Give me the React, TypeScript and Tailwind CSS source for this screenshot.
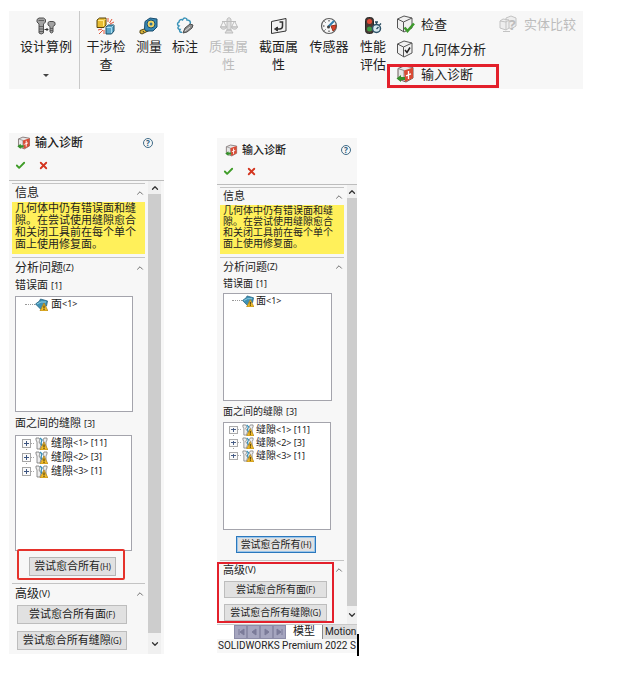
import type { ReactNode } from "react";
import clsx from "clsx";
import { Check, ChevronDown, ChevronUp, X } from "lucide-react";

function StudyIcon() {
  return (
    <svg width="20" height="18" viewBox="0 0 20 18" fill="#a3a3a3" stroke="#505050" strokeLinejoin="round">
      <path d="M1 2.500 3 1h4.500l2 1.500v2.500L7.500 7v9L5.200 17 3 16V7L1 5z" />
      <path d="M12 5.500 13.500 4.500H17l2 1v2.500L17 9.500v5.500L15.500 16 14 15V9.500l-2-1.500z" />
      <path d="M3 9.500h4M3 12h4M3 14.500h4M14 11.500h3M14 13.500h3M2.500 3.500h5.500" fill="none" strokeWidth="0.800" />
      <path d="M8.500 12.500H12M10.500 11l1.500 1.500-1.500 1.500" fill="none" stroke="#2f2f2f" />
    </svg>
  );
}

function InterferenceIcon() {
  return (
    <svg width="20" height="18" viewBox="0 0 20 18" strokeLinejoin="round">
      <path d="M1 3 3.500 1H10v7l-2 2.500H1z" fill="#e8bd32" stroke="#54430c" />
      <path d="M2 3.500h5.500V9M8 3.500 9.500 2" fill="none" stroke="#ffe98b" />
      <path d="M10 10l2.500-2H18v6l-2.500 3H10z" fill="#5ba6c8" stroke="#1b4c66" />
      <path d="M10.500 10.500h5V16M15.500 10.500 17.500 8.500" fill="none" stroke="#a9ddf0" />
      <path d="M12 5V1M13.500 6 16 2M14 7l4-2M6 12l-4 1M7 13l-4 4M8 13v4" fill="none" stroke="#e0563a" />
    </svg>
  );
}

function MeasureIcon() {
  return (
    <svg width="20" height="18" viewBox="0 0 20 18">
      <path d="M1 13.500 8 11l3 2L3 17l-2-1z" fill="#d9b53a" stroke="#57481a" />
      <path d="m4 14 1 1.500M7 13l1 1.500" stroke="#3e3720" />
      <path d="M6 4.500 11 1l7 1v8l-4 4H7L5.500 12z" fill="#3988b4" stroke="#194c6d" />
      <circle cx="12" cy="7" r="4" fill="#f0d463" stroke="#165077" />
      <circle cx="12" cy="7" r="1.500" fill="#2e7096" />
    </svg>
  );
}

function MarkupIcon() {
  return (
    <svg width="20" height="18" viewBox="0 0 20 18" fill="none">
      <path d="M7 15c-2 1-3-1-2-2.500-2 0-3-2-1-3.500-2-1-2-3 0-4C4 3 6 2 7.500 3 9 0 12 1 12 3c3 0 4 2 3 4" stroke="#3a93b8" strokeWidth="1.500" />
      <path d="m8 16 2-5 5-4 3 1-1 3-5 4z" fill="#8e8e8e" stroke="#4c4c4c" />
      <path d="m10 14 5-4" stroke="#ddd" />
    </svg>
  );
}

function MassIcon() {
  return (
    <svg width="20" height="18" viewBox="0 0 20 18" fill="none" stroke="#bdbdbd">
      <path d="M8 3c0-3 4-3 4 0v10h-4zM6 16l2-3h4l2 3zM3 4.500h14" fill="#dedede" />
      <path d="M4 5 1.500 10h6L5 5M15 5l-2.500 5h6L16 5" />
      <path d="M1.500 10c1 3 5 3 6 0zM12.500 10c1 3 5 3 6 0z" fill="#dcdcdc" />
    </svg>
  );
}

function SectionIcon() {
  return (
    <svg width="18" height="18" viewBox="0 0 18 18" fill="none" stroke="#333">
      <path d="M1.500 4.500 16 1.500V14L1.500 16.500z" fill="#f1f1f1" />
      <path d="M9.500 5h3v4c0 2-1 3-3 3H7" strokeWidth="1.500" />
      <path d="m7.500 10-3 2 3 2z" fill="#333" />
    </svg>
  );
}

function SensorIcon() {
  return (
    <svg width="18" height="18" viewBox="0 0 18 18" fill="none">
      <circle cx="9" cy="9" r="7.500" fill="#f7f7f7" stroke="#5d5d5d" strokeWidth="1.200" />
      <path d="M9 3v1.500M4.500 4.500l1 1M3 9h1.500M4.500 13.500l1-1M9 15v-1.500" stroke="#333" />
      <path d="m8 10 6-6" stroke="#2f7fae" strokeWidth="2" />
      <path d="m11 9 5-1c0 3-1 5-3 6z" fill="#d8432c" stroke="#983019" />
      <circle cx="8.500" cy="10" r="1.500" fill="#444" />
    </svg>
  );
}

function PerformanceIcon() {
  return (
    <svg width="18" height="18" viewBox="0 0 18 18">
      <rect x="1.500" y="0.500" width="8" height="16" rx="3" fill="#4b3934" stroke="#272727" />
      <circle cx="5.500" cy="4.500" r="2.500" fill="#e24a36" />
      <circle cx="5.500" cy="12" r="2.500" fill="#3f9b45" />
      <circle cx="12.500" cy="11.500" r="4" fill="#d9e9f1" stroke="#2c5268" strokeWidth="1.500" />
      <path d="M12.500 7V5M11 5h3M15.500 8 17 6.500M12.500 12l2-2" fill="none" stroke="#274a5e" strokeWidth="1.300" />
    </svg>
  );
}

function Cube() {
  return (
    <>
      <path d="M1.500 4 8 1l8 2v10l-8 4-6.500-4z" fill="#f0f0f0" stroke="#555" strokeLinejoin="round" />
      <path d="m1.500 4 6 3 8.500-4M7.500 7v10" fill="none" stroke="#555" />
    </>
  );
}

function CheckIcon() {
  return (
    <svg width="19" height="18" viewBox="0 0 19 18">
      <Cube />
      <path d="m8.500 12.500 3 3.500L18 8.500" fill="none" stroke="#3d9a2c" strokeWidth="2.500" />
    </svg>
  );
}

function GeometryIcon() {
  return (
    <svg width="19" height="18" viewBox="0 0 19 18">
      <Cube />
      <path d="m9 10 2 2.500 3-5" fill="none" stroke="#222" strokeWidth="1.500" />
    </svg>
  );
}

function DiagnosisIcon({ className }: { className: string }) {
  return (
    <svg className={className} viewBox="0 0 19 18">
      <path d="M2 3.500 8 1l9 1.500V13l-7 4-8-3z" fill="#e6e6e6" stroke="#6a5a58" strokeLinejoin="round" />
      <path d="m2 3.500 6 2v10" fill="none" stroke="#8a8a8a" />
      <path d="m8 5.500 9-3V13l-8 4z" fill="#d94b35" />
      <path d="M12.500 6v8M10 10.800l5-2" stroke="#fff" strokeWidth="1.300" />
      <path d="M0.500 13.500 5 10v2h4v3H5v2z" fill="#35902a" />
    </svg>
  );
}

function CompareIcon() {
  return (
    <svg width="19" height="18" viewBox="0 0 19 18" fill="#eee" stroke="#c3c3c3">
      <path d="M7 3 12 1l5 2v8l-5 3-5-3z" />
      <path d="m1 6 3-2 6 1v8l-3 2-6-2zM1 6l6 1 3-2M7 7v8M4 16.500h7" />
      <text x="10" y="15" fontSize="14" fontWeight="700" fontFamily="Noto Sans" fill="#bdbdbd" stroke="none">?</text>
    </svg>
  );
}

function WarningSign() {
  return (
    <>
      <path d="m9 5 4 8H5z" fill="#f2bd28" stroke="#ac7c12" strokeWidth="0.700" />
      <path d="M9 7.500v3M9 11v1" stroke="#392c08" />
    </>
  );
}

function FaceIcon({ className }: { className: string }) {
  return (
    <svg className={className} viewBox="0 0 13 13">
      <path d="m0.500 6 4-3 1-2 7 2-1 5-5 4z" fill="#3f91b5" stroke="#23617f" strokeWidth="0.800" />
      <path d="m2 6 4-2 5 0" fill="none" stroke="#8fd0e4" />
      <WarningSign />
    </svg>
  );
}

function GapIcon({ className }: { className: string }) {
  return (
    <svg className={className} viewBox="0 0 13 13">
      <path d="M1 1h3l1 2-1 2 2 3-1 4H2V5L1 3z" fill="#eee" stroke="#777" strokeWidth="0.800" />
      <path d="M12 1H9L8 3l1 2-1 2v5h3V5l1-2z" fill="#eee" stroke="#777" strokeWidth="0.800" />
      <path d="m5 1 2 2-1 3 1 3" fill="none" stroke="#338cb6" strokeWidth="1.300" />
      <WarningSign />
    </svg>
  );
}

function Expander({ last }: { last: boolean }) {
  return (
    <svg className="h-full w-[13px] shrink-0" viewBox="0 0 13 14" fill="none" shapeRendering="crispEdges">
      {!last && <path d="M4.500 11v3" stroke="#999" strokeDasharray="1 1" />}
      <path d="M9 7.500h4" stroke="#aaa" strokeDasharray="1 1" />
      <rect x="0.500" y="3.500" width="8" height="8" fill="#fafafa" stroke="#a5a5a5" />
      <path d="M2 7.500h5M4.500 5v5" stroke="#3d5580" />
    </svg>
  );
}

const tools = [
  { label: "干涉检查", icon: <InterferenceIcon />, width: "w-[52px]" },
  { label: "测量", icon: <MeasureIcon />, width: "w-[34px]" },
  { label: "标注", icon: <MarkupIcon />, width: "w-[38px]" },
  { label: "质量属性", icon: <MassIcon />, width: "w-[49px]", disabled: true },
  { label: "截面属性", icon: <SectionIcon />, width: "w-[51px]" },
  { label: "传感器", icon: <SensorIcon />, width: "w-[50px]" },
  { label: "性能评估", icon: <PerformanceIcon />, width: "w-[38px]" },
];

function SmallTool({ icon, label, disabled }: { icon: ReactNode; label: string; disabled?: boolean }) {
  return (
    <button disabled={disabled} className="flex h-[25px] items-center gap-[6px] whitespace-nowrap disabled:text-[#bcbcbc]">
      {icon}
      {label}
    </button>
  );
}

function Ribbon() {
  return (
    <header className="mr-[38px] ml-[9px] flex h-[78px] bg-[#f7f7f7] text-[13px] leading-[18px] text-[#222]">
      <button className="flex w-[71px] shrink-0 flex-col items-center border-r border-[#c9c9c9] pt-[6px] pl-1">
        <StudyIcon />
        <span className="mt-[2px] whitespace-nowrap">设计算例</span>
        <span className="mt-[19px] border-x-[3px] border-t-[3px] border-x-transparent border-t-[#444]" />
      </button>
      {tools.map((tool) => (
        <button
          key={tool.label}
          disabled={tool.disabled}
          className={clsx("flex shrink-0 flex-col items-center px-1 pt-[6px] disabled:text-[#bcbcbc]", tool.width)}
        >
          {tool.icon}
          <span className="mt-[2px]">{tool.label}</span>
        </button>
      ))}
      <div className="ml-1 flex w-[103px] shrink-0 flex-col">
        <SmallTool icon={<CheckIcon />} label="检查" />
        <SmallTool icon={<GeometryIcon />} label="几何体分析" />
        <div className="relative">
          <SmallTool icon={<DiagnosisIcon className="h-[18px] w-[19px]" />} label="输入诊断" />
          <span className="pointer-events-none absolute top-[3px] right-0 -left-[9px] h-[24px] border-[3px] border-[#e3202b]" />
        </div>
      </div>
      <div>
        <SmallTool icon={<CompareIcon />} label="实体比较" disabled />
      </div>
    </header>
  );
}

const large = {
  panel: "text-[11px]",
  titleRow: "h-5 pr-[11px] text-[12px]",
  titleIcon: "size-[14px]",
  toolRow: "h-6",
  header: "h-12",
  section: "h-[18px] text-[12px]",
  sectionTall: "h-5 text-[12px]",
  message: "h-[52px] leading-[12px] mt-px mb-[3px] pl-[3px]",
  label: "h-[17px]",
  list: "h-[116px]",
  row: "h-[14px] pl-[6px]",
  rowIcon: "mr-[3px] size-[13px] shrink-0",
  button: "h-[19px]",
  heal: "w-[87px] mt-[6px] mb-[7px] ml-[17px] border-[#b5b5b5]",
  advanced: "gap-[7px] mr-[18px] ml-[5px] pb-[4px]",
  scroll: "w-[13px] mr-[3px]",
  arrow: "h-[13px]",
  downArrow: "h-[21px]",
};

const small: typeof large = {
  panel: "text-[10px]",
  titleRow: "h-6 pr-[6px] text-[11px]",
  titleIcon: "size-[13px]",
  toolRow: "h-[18px]",
  header: "h-[47px]",
  section: "h-[18px] text-[11px]",
  sectionTall: "h-[19px] text-[11px]",
  message: "h-[49px] leading-[11px] mb-[3px] pl-[3px]",
  label: "h-[15px]",
  list: "h-[108px]",
  row: "h-[13px] pl-[5px]",
  rowIcon: "mr-[2px] size-[12px] shrink-0",
  button: "h-[17px]",
  heal: "w-[80px] mt-[6px] mb-[7px] ml-[16px] border-[#2b78bd] ring-1 ring-inset ring-[#9cc6ea]",
  advanced: "gap-[6px] mr-[17px] ml-[4px] pb-[3px]",
  scroll: "w-[10px]",
  arrow: "h-[13px]",
  downArrow: "h-[18px]",
};

function SectionHeader({ label, hotkey, className }: { label: string; hotkey?: string; className: string }) {
  return (
    <button className={clsx("flex w-full items-center border-t border-[#c4c4c4] pl-[3px] text-[#222]", className)}>
      {label}
      {hotkey && <span className="text-[9px]">({hotkey})</span>}
      <ChevronUp className="ml-auto size-[10px] text-[#555]" />
    </button>
  );
}

function PanelButton({ label, hotkey, className }: { label: string; hotkey: string; className: string }) {
  return (
    <button className={clsx("flex items-center justify-center border bg-[#e1e1e1] whitespace-nowrap", className)}>
      {label}
      <span className="text-[8px]">({hotkey})</span>
    </button>
  );
}

function DiagnosisPanel({ size, marked }: { size: typeof large; marked: "heal" | "advanced" }) {
  const gaps = [11, 3, 1];
  return (
    <section className={clsx("min-w-0 bg-[#f7f7f7] text-[#222]", size.panel)}>
      <div className={clsx("border-b border-[#bdbdbd]", size.header)}>
        <div className={clsx("flex items-center gap-1 pl-[8px] font-medium", size.titleRow)}>
          <DiagnosisIcon className={size.titleIcon} />
          <h2>输入诊断</h2>
          <button
            aria-label="帮助"
            className="ml-auto flex size-[10px] items-center justify-center rounded-full border border-[#416c88] text-[8px] leading-none font-bold text-[#285b7b]"
          >
            ?
          </button>
        </div>
        <div className={clsx("flex items-center gap-[12px] pl-[6px]", size.toolRow)}>
          <button aria-label="确定">
            <Check className="size-[11px] text-[#3e9c27]" strokeWidth={4} />
          </button>
          <button aria-label="取消">
            <X className="size-[11px] text-[#d4351f]" strokeWidth={4} />
          </button>
        </div>
      </div>
      <div className="flex">
        <div className="min-w-0 grow px-[3px] pt-[2px]">
          <SectionHeader label="信息" className={size.section} />
          <p className={clsx("bg-[#fff05a] pr-[6px]", size.message)}>
            几何体中仍有错误面和缝隙。在尝试使用缝隙愈合和关闭工具前在每个单个面上使用修复面。
          </p>
          <SectionHeader label="分析问题" hotkey="Z" className={size.sectionTall} />
          <h3 className={clsx("flex items-center gap-[3px] pl-[3px]", size.label)}>
            错误面 <span className="text-[9px]">[1]</span>
          </h3>
          <ul className={clsx("mt-[2px] mr-3 ml-[3px] border border-[#a4a4ac] bg-white", size.list)}>
            <li className={clsx("flex items-center", size.row)}>
              <span className="ml-[3px] w-[10px] border-t border-dotted border-[#999]" />
              <FaceIcon className={size.rowIcon} />
              <span>面</span>
              <span className="text-[9px]">&lt;1&gt;</span>
            </li>
          </ul>
          <h3 className={clsx("mt-[3px] flex items-center gap-[3px] pl-[3px]", size.label)}>
            面之间的缝隙 <span className="text-[9px]">[3]</span>
          </h3>
          <ul className={clsx("mt-[3px] mr-[13px] ml-[3px] border border-[#a4a4ac] bg-white", size.list)}>
            {gaps.map((count, i) => (
              <li key={i} className={clsx("flex items-center", size.row)}>
                <Expander last={i === gaps.length - 1} />
                <GapIcon className={size.rowIcon} />
                <span>缝隙</span>
                <span className="text-[9px]">
                  &lt;{i + 1}&gt; [{count}]
                </span>
              </li>
            ))}
          </ul>
          <div className="relative flow-root">
            <PanelButton label="尝试愈合所有" hotkey="H" className={clsx(size.heal, size.button)} />
            {marked === "heal" && (
              <span className="pointer-events-none absolute -top-[2px] left-[5px] h-[31px] w-[108px] rounded-[2px] border-2 border-[#e5322b]" />
            )}
          </div>
          <div className="relative">
            <SectionHeader label="高级" hotkey="V" className={size.sectionTall} />
            <div className={clsx("flex flex-col pt-[2px]", size.advanced)}>
              <PanelButton label="尝试愈合所有面" hotkey="F" className={clsx("border-[#bdbdbd]", size.button)} />
              <PanelButton label="尝试愈合所有缝隙" hotkey="G" className={clsx("border-[#bdbdbd]", size.button)} />
            </div>
            {marked === "advanced" && (
              <span className="pointer-events-none absolute top-[2px] -left-[3px] h-[61px] w-[117px] border-2 border-[#e3202b]" />
            )}
          </div>
        </div>
        <div className={clsx("flex shrink-0 flex-col bg-[#f0f0f0]", size.scroll)}>
          <button aria-label="向上滚动" className={clsx("flex items-center justify-center", size.arrow)}>
            <ChevronUp className="size-[10px] text-[#333]" strokeWidth={3} />
          </button>
          <div className="grow bg-[#cdcdcd]" />
          <button aria-label="向下滚动" className={clsx("flex items-center justify-center", size.downArrow)}>
            <ChevronDown className="size-[10px] text-[#333]" strokeWidth={3} />
          </button>
        </div>
      </div>
    </section>
  );
}

const steps = [
  { label: "第一个", path: "M3 2v6M8 2 4 5l4 3z" },
  { label: "上一个", path: "M7 2 3 5l4 3z" },
  { label: "下一个", path: "m3 2 4 3-4 3z" },
  { label: "最后一个", path: "m2 2 4 3-4 3zM7 2v6" },
];

function StatusArea() {
  return (
    <footer className="relative bg-[#f7f7f7] font-['Roboto','Noto_Sans_CJK_SC',sans-serif] text-[10px] text-[#222]">
      <div className="flex h-[15px] border-t border-[#c9c9c9] bg-white">
        <div className="ml-[17px] flex shrink-0">
          {steps.map((step) => (
            <button
              key={step.label}
              aria-label={step.label}
              className="flex w-[13px] items-center justify-center border border-[#8c8ca8] bg-[#a5a5bf]"
            >
              <svg width="10" height="10" viewBox="0 0 10 10" fill="#7b7b99" stroke="#7b7b99">
                <path d={step.path} />
              </svg>
            </button>
          ))}
        </div>
        <button className="w-[36px] shrink-0 text-[11px] leading-[14px]">模型</button>
        <button className="min-w-0 grow border-l border-[#888] bg-[#dedede] pl-[2px] text-left leading-[14px]">
          Motion
        </button>
      </div>
      <p className="h-[14px] pl-px leading-[14px] whitespace-nowrap">SOLIDWORKS Premium 2022 S</p>
      <span className="absolute top-[10px] -right-[2px] h-[22px] w-[2px] bg-black" />
    </footer>
  );
}

export default function App() {
  return (
    <div className="min-h-screen bg-white pt-[11px] font-['Noto_Sans','Noto_Sans_CJK_SC',sans-serif]">
      <Ribbon />
      <main className="mt-[44px] grid grid-cols-[155fr_140fr_211fr] items-start gap-x-[53px] pl-[9px]">
        <DiagnosisPanel size={large} marked="heal" />
        <div className="mt-[5px] min-w-0">
          <DiagnosisPanel size={small} marked="advanced" />
          <StatusArea />
        </div>
      </main>
    </div>
  );
}
